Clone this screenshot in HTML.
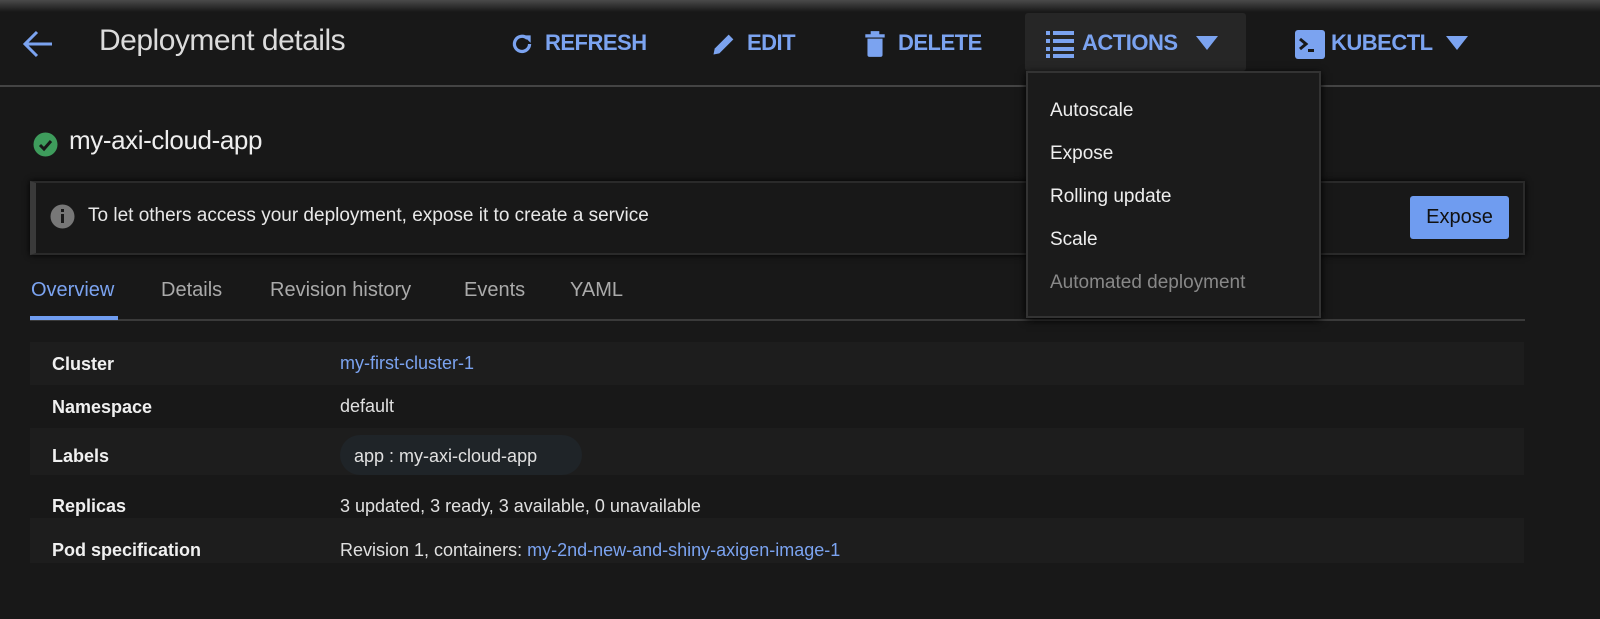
<!DOCTYPE html>
<html><head><style>
*{margin:0;padding:0;box-sizing:border-box}
body{width:1600px;height:619px;background:#181818;font-family:"Liberation Sans",sans-serif;position:relative;overflow:hidden;color:#e8e8e8}
.a{position:absolute;white-space:nowrap}
.top{position:absolute;left:0;top:0;width:1600px;height:12px;background:linear-gradient(#4a4a4a,#181818)}
.btn{color:#7ba3f0;font-weight:bold;font-size:22px;letter-spacing:-0.5px}
.row{position:absolute;left:30px;width:1494px;font-size:18px}
.row .k{position:absolute;left:22px;font-weight:bold;color:#f0f0f0}
.row .v{position:absolute;left:310px;color:#e0e0e0}
.blue,.row .v.blue{color:#7ba3f0}
.tab{font-size:20px;color:#aaa;top:279px}
.menu div{position:absolute;left:22px;font-size:19px;color:#eee}
</style></head><body>
<div class="top"></div>
<svg class="a" style="left:22px;top:29px" width="32" height="30" viewBox="0 0 32 30"><path d="M30 15H4M15 3L3 15l12 12" fill="none" stroke="#7ba3f0" stroke-width="3"/></svg>
<div class="a" style="left:99px;top:24px;font-size:30px;color:#dcdcdc;letter-spacing:-0.5px">Deployment details</div>
<svg class="a" style="left:509px;top:31px" width="26" height="26" viewBox="0 0 24 24"><path d="M19 12a7 7 0 1 1-2-5" fill="none" stroke="#7ba3f0" stroke-width="3"/><path d="M13 4h7v7z" fill="#7ba3f0"/></svg>
<div class="a btn" style="left:545px;top:30px">REFRESH</div>
<svg class="a" style="left:710px;top:30px" width="28" height="28" viewBox="0 0 24 24"><path d="M3 21l1-5L16 4l4 4L8 20z" fill="#7ba3f0"/></svg>
<div class="a btn" style="left:747px;top:30px">EDIT</div>
<svg class="a" style="left:862px;top:30px" width="26" height="28" viewBox="0 0 24 26"><path d="M3 4h18v3H3zM8 1h8v3H8zM5 8h14v15q0 2-2 2H7q-2 0-2-2z" fill="#7ba3f0"/></svg>
<div class="a btn" style="left:898px;top:30px">DELETE</div>
<div class="a" style="left:1025px;top:13px;width:221px;height:58px;background:#262626;border-radius:3px"></div>
<svg class="a" style="left:1046px;top:30px" width="28" height="28" viewBox="0 0 28 28"><g fill="#7ba3f0"><rect x="0" y="1" width="4" height="4"/><rect x="7" y="1" width="21" height="4"/><rect x="0" y="9" width="4" height="4"/><rect x="7" y="9" width="21" height="4"/><rect x="0" y="17" width="4" height="4"/><rect x="7" y="17" width="21" height="4"/><rect x="0" y="24" width="4" height="4"/><rect x="7" y="24" width="21" height="4"/></g></svg>
<div class="a btn" style="left:1082px;top:30px">ACTIONS</div>
<svg class="a" style="left:1196px;top:36px" width="22" height="14"><path d="M0 0h22L11 14z" fill="#7ba3f0"/></svg>
<svg class="a" style="left:1295px;top:30px" width="30" height="29" viewBox="0 0 30 29"><rect width="30" height="29" rx="3" fill="#7ba3f0"/><path d="M5 9l6 5-6 5" fill="none" stroke="#181818" stroke-width="3"/><rect x="13" y="19" width="6" height="3" fill="#181818"/></svg>
<div class="a btn" style="left:1331px;top:30px">KUBECTL</div>
<svg class="a" style="left:1446px;top:36px" width="22" height="14"><path d="M0 0h22L11 14z" fill="#7ba3f0"/></svg>
<div class="a" style="left:0;top:85px;width:1600px;height:2px;background:#444"></div>

<svg class="a" style="left:33px;top:132px" width="25" height="25"><circle cx="12.5" cy="12.5" r="12" fill="#3e9c5c"/><path d="M7 13l4 4 7-8" fill="none" stroke="#181818" stroke-width="3"/></svg>
<div class="a" style="left:69px;top:125px;font-size:26px;color:#eee;letter-spacing:-0.4px">my-axi-cloud-app</div>

<div class="a" style="left:30px;top:181px;width:1495px;height:74px;border:2px solid #2a2a2a;border-left:6px solid #3a3a3a;box-shadow:0 0 6px #000"></div>
<svg class="a" style="left:50px;top:204px" width="25" height="25"><circle cx="12.5" cy="12.5" r="12" fill="#777"/><rect x="11" y="10" width="3" height="9" fill="#181818"/><rect x="11" y="5" width="3" height="3" fill="#181818"/></svg>
<div class="a" style="left:88px;top:205px;font-size:19px;color:#e8e8e8">To let others access your deployment, expose it to create a service</div>
<div class="a" style="left:1410px;top:196px;width:99px;height:43px;background:#6f9cf0;border-radius:3px;color:#111;font-size:20px;text-align:center;line-height:43px">Expose</div>

<div class="a tab" style="left:31px;color:#7ba3f0">Overview</div>
<div class="a tab" style="left:161px">Details</div>
<div class="a tab" style="left:270px">Revision history</div>
<div class="a tab" style="left:464px">Events</div>
<div class="a tab" style="left:570px">YAML</div>
<div class="a" style="left:30px;top:319px;width:1495px;height:2px;background:#3a3a3a"></div>
<div class="a" style="left:30px;top:316px;width:88px;height:4px;background:#6f9cf0"></div>

<div class="row" style="top:342px;height:43px;background:#1d1d1d"><span class="a k" style="top:12px">Cluster</span><span class="a v blue" style="top:11px">my-first-cluster-1</span></div>
<div class="row" style="top:385px;height:43px"><span class="a k" style="top:12px">Namespace</span><span class="a v" style="top:11px">default</span></div>
<div class="row" style="top:428px;height:47px;background:#1d1d1d"><span class="a k" style="top:18px">Labels</span><span class="a" style="left:310px;top:7px;height:40px;width:242px;border-radius:20px;background:#1f2428"></span><span class="a v" style="left:324px;top:18px">app : my-axi-cloud-app</span></div>
<div class="row" style="top:475px;height:43px"><span class="a k" style="top:21px">Replicas</span><span class="a v" style="top:21px">3 updated, 3 ready, 3 available, 0 unavailable</span></div>
<div class="row" style="top:518px;height:45px;background:#1d1d1d"><span class="a k" style="top:22px">Pod specification</span><span class="a v" style="top:22px">Revision 1, containers: <span class="blue">my-2nd-new-and-shiny-axigen-image-1</span></span></div>

<div class="a menu" style="left:1026px;top:71px;width:295px;height:247px;background:#1b1b1b;border:2px solid #333;box-shadow:0 2px 8px #000">
<div style="top:27px">Autoscale</div>
<div style="top:70px">Expose</div>
<div style="top:113px">Rolling update</div>
<div style="top:156px">Scale</div>
<div style="top:199px;color:#888">Automated deployment</div>
</div>
</body></html>
